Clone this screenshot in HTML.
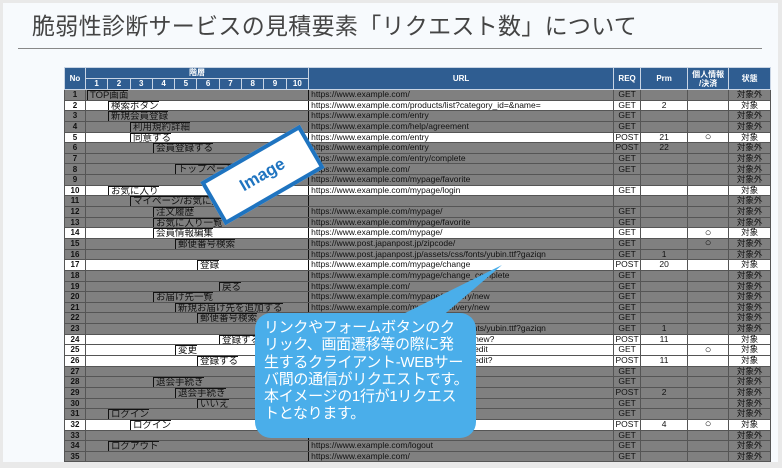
<!DOCTYPE html>
<html><head><meta charset="utf-8"><style>
*{margin:0;padding:0;box-sizing:border-box}
body{width:782px;height:468px;background:#e9e9e9;position:relative;overflow:hidden;font-family:"Liberation Sans","Noto Sans CJK JP",sans-serif}
.slide{position:absolute;left:3px;top:3px;width:775px;height:459px;background:#f7fafd}
.title{position:absolute;left:32px;top:7px;font-size:23px;color:#444;letter-spacing:0.3px;white-space:nowrap}
.rule{position:absolute;left:18px;top:48px;width:744px;height:1px;background:#888}
table{position:absolute;left:64px;top:67px;width:706px;border-collapse:collapse;table-layout:fixed;font-size:8.5px;color:#111}
td,th{border:1px solid #555;padding:0;white-space:nowrap;overflow:hidden;line-height:9.6px;height:10.65px}
th{background:#2f5d91;color:#fff;font-weight:bold;border-color:#c8d4e4;font-size:8px;line-height:10px}
tr.g td{background:#808080}
tr.w td{background:#fff}
td.n{text-align:center;font-weight:bold;font-size:8px}
td.lv{position:relative;border-right:1.5px solid #111}
td.lv span{position:absolute;top:0;font-size:9.5px;border-left:1.5px solid #111;border-top:1.5px solid #111;padding-left:2px;height:11px;line-height:10px}
td.u{padding-left:2px}
td.c{text-align:center}
td.o{text-align:center;font-size:11px;line-height:9px}
.badge{position:absolute;left:205px;top:150px;width:115px;height:50px;background:#fff;border:4px solid #1f74c0;transform:rotate(-30deg);color:#1f74c0;font-weight:bold;font-size:17px;text-align:center;line-height:42px}
.bubble{position:absolute;left:255px;top:313px;width:221px;height:125px;background:#4aaeea;border-radius:16px;color:#fff;font-size:15px;line-height:17.3px;padding:6px 0 0 9px;white-space:nowrap;letter-spacing:-0.3px}
.tail{position:absolute;left:0;top:0}
</style></head><body>
<div class="slide"></div>
<div class="title">脆弱性診断サービスの見積要素「リクエスト数」について</div>
<div class="rule"></div>
<table>
<colgroup><col style="width:21px"><col span="10" style="width:22.3px"><col style="width:305px"><col style="width:27px"><col style="width:47px"><col style="width:41px"><col style="width:42px"></colgroup>
<tr><th rowspan="2">No</th><th colspan="10" style="height:11px">階層</th><th rowspan="2">URL</th><th rowspan="2">REQ</th><th rowspan="2">Prm</th><th rowspan="2" style="line-height:9px">個人情報<br>/決済</th><th rowspan="2">状態</th></tr>
<tr><th>1</th><th>2</th><th>3</th><th>4</th><th>5</th><th>6</th><th>7</th><th>8</th><th>9</th><th>10</th></tr>
<tr class="g"><td class="n">1</td><td colspan="10" class="lv"><span style="left:1px">TOP画面</span></td><td class="u">https://www.example.com/</td><td class="c">GET</td><td class="c"></td><td></td><td class="c">対象外</td></tr>
<tr class="w"><td class="n">2</td><td colspan="10" class="lv"><span style="left:22px">検索ボタン</span></td><td class="u">https://www.example.com/products/list?category_id=&amp;name=</td><td class="c">GET</td><td class="c">2</td><td></td><td class="c">対象</td></tr>
<tr class="g"><td class="n">3</td><td colspan="10" class="lv"><span style="left:22px">新規会員登録</span></td><td class="u">https://www.example.com/entry</td><td class="c">GET</td><td></td><td></td><td class="c">対象外</td></tr>
<tr class="g"><td class="n">4</td><td colspan="10" class="lv"><span style="left:44px">利用規約詳細</span></td><td class="u">https://www.example.com/help/agreement</td><td class="c">GET</td><td></td><td></td><td class="c">対象外</td></tr>
<tr class="w"><td class="n">5</td><td colspan="10" class="lv"><span style="left:44px">同意する</span></td><td class="u">https://www.example.com/entry</td><td class="c">POST</td><td class="c">21</td><td class="o">○</td><td class="c">対象</td></tr>
<tr class="g"><td class="n">6</td><td colspan="10" class="lv"><span style="left:67px">会員登録する</span></td><td class="u">https://www.example.com/entry</td><td class="c">POST</td><td class="c">22</td><td></td><td class="c">対象外</td></tr>
<tr class="g"><td class="n">7</td><td colspan="10" class="lv"></td><td class="u">https://www.example.com/entry/complete</td><td class="c">GET</td><td></td><td></td><td class="c">対象外</td></tr>
<tr class="g"><td class="n">8</td><td colspan="10" class="lv"><span style="left:89px">トップページへ</span></td><td class="u">https://www.example.com/</td><td class="c">GET</td><td></td><td></td><td class="c">対象外</td></tr>
<tr class="g"><td class="n">9</td><td colspan="10" class="lv"></td><td class="u">https://www.example.com/mypage/favorite</td><td class="c"></td><td></td><td></td><td class="c">対象外</td></tr>
<tr class="w"><td class="n">10</td><td colspan="10" class="lv"><span style="left:22px">お気に入り</span></td><td class="u">https://www.example.com/mypage/login</td><td class="c">GET</td><td></td><td></td><td class="c">対象</td></tr>
<tr class="g"><td class="n">11</td><td colspan="10" class="lv"><span style="left:44px">マイページ/お気に入り</span></td><td class="u"></td><td class="c"></td><td></td><td></td><td class="c">対象外</td></tr>
<tr class="g"><td class="n">12</td><td colspan="10" class="lv"><span style="left:67px">注文履歴</span></td><td class="u">https://www.example.com/mypage/</td><td class="c">GET</td><td></td><td></td><td class="c">対象外</td></tr>
<tr class="g"><td class="n">13</td><td colspan="10" class="lv"><span style="left:67px">お気に入り一覧</span></td><td class="u">https://www.example.com/mypage/favorite</td><td class="c">GET</td><td></td><td></td><td class="c">対象外</td></tr>
<tr class="w"><td class="n">14</td><td colspan="10" class="lv"><span style="left:67px">会員情報編集</span></td><td class="u">https://www.example.com/mypage/</td><td class="c">GET</td><td></td><td class="o">○</td><td class="c">対象</td></tr>
<tr class="g"><td class="n">15</td><td colspan="10" class="lv"><span style="left:89px">郵便番号検索</span></td><td class="u">https://www.post.japanpost.jp/zipcode/</td><td class="c">GET</td><td></td><td class="o">○</td><td class="c">対象外</td></tr>
<tr class="g"><td class="n">16</td><td colspan="10" class="lv"></td><td class="u">https://www.post.japanpost.jp/assets/css/fonts/yubin.ttf?gaziqn</td><td class="c">GET</td><td class="c">1</td><td></td><td class="c">対象外</td></tr>
<tr class="w"><td class="n">17</td><td colspan="10" class="lv"><span style="left:111px">登録</span></td><td class="u">https://www.example.com/mypage/change</td><td class="c">POST</td><td class="c">20</td><td></td><td class="c">対象</td></tr>
<tr class="g"><td class="n">18</td><td colspan="10" class="lv"></td><td class="u">https://www.example.com/mypage/change_complete</td><td class="c">GET</td><td></td><td></td><td class="c">対象外</td></tr>
<tr class="g"><td class="n">19</td><td colspan="10" class="lv"><span style="left:133px">戻る</span></td><td class="u">https://www.example.com/</td><td class="c">GET</td><td></td><td></td><td class="c">対象外</td></tr>
<tr class="g"><td class="n">20</td><td colspan="10" class="lv"><span style="left:67px">お届け先一覧</span></td><td class="u">https://www.example.com/mypage/delivery/new</td><td class="c">GET</td><td></td><td></td><td class="c">対象外</td></tr>
<tr class="g"><td class="n">21</td><td colspan="10" class="lv"><span style="left:89px">新規お届け先を追加する</span></td><td class="u">https://www.example.com/mypage/delivery/new</td><td class="c">GET</td><td></td><td></td><td class="c">対象外</td></tr>
<tr class="g"><td class="n">22</td><td colspan="10" class="lv"><span style="left:111px">郵便番号検索</span></td><td class="u"></td><td class="c">GET</td><td></td><td></td><td class="c">対象外</td></tr>
<tr class="g"><td class="n">23</td><td colspan="10" class="lv"></td><td class="u">https://www.post.japanpost.jp/assets/css/fonts/yubin.ttf?gaziqn</td><td class="c">GET</td><td class="c">1</td><td></td><td class="c">対象外</td></tr>
<tr class="w"><td class="n">24</td><td colspan="10" class="lv"><span style="left:133px">登録する</span></td><td class="u">https://www.example.com/mypage/delivery/new?</td><td class="c">POST</td><td class="c">11</td><td></td><td class="c">対象</td></tr>
<tr class="w"><td class="n">25</td><td colspan="10" class="lv"><span style="left:89px">変更</span></td><td class="u">https://www.example.com/mypage/delivery/edit</td><td class="c">GET</td><td></td><td class="o">○</td><td class="c">対象</td></tr>
<tr class="w"><td class="n">26</td><td colspan="10" class="lv"><span style="left:111px">登録する</span></td><td class="u">https://www.example.com/mypage/delivery/edit?</td><td class="c">POST</td><td class="c">11</td><td></td><td class="c">対象</td></tr>
<tr class="g"><td class="n">27</td><td colspan="10" class="lv"></td><td class="u"></td><td class="c">GET</td><td></td><td></td><td class="c">対象外</td></tr>
<tr class="g"><td class="n">28</td><td colspan="10" class="lv"><span style="left:67px">退会手続き</span></td><td class="u"></td><td class="c">GET</td><td></td><td></td><td class="c">対象外</td></tr>
<tr class="g"><td class="n">29</td><td colspan="10" class="lv"><span style="left:89px">退会手続き</span></td><td class="u"></td><td class="c">POST</td><td class="c">2</td><td></td><td class="c">対象外</td></tr>
<tr class="g"><td class="n">30</td><td colspan="10" class="lv"><span style="left:111px">いいえ</span></td><td class="u"></td><td class="c">GET</td><td></td><td></td><td class="c">対象外</td></tr>
<tr class="g"><td class="n">31</td><td colspan="10" class="lv"><span style="left:22px">ログイン</span></td><td class="u"></td><td class="c">GET</td><td></td><td></td><td class="c">対象外</td></tr>
<tr class="w"><td class="n">32</td><td colspan="10" class="lv"><span style="left:44px">ログイン</span></td><td class="u"></td><td class="c">POST</td><td class="c">4</td><td class="o">○</td><td class="c">対象</td></tr>
<tr class="g"><td class="n">33</td><td colspan="10" class="lv"></td><td class="u"></td><td class="c">GET</td><td></td><td></td><td class="c">対象外</td></tr>
<tr class="g"><td class="n">34</td><td colspan="10" class="lv"><span style="left:22px">ログアウト</span></td><td class="u">https://www.example.com/logout</td><td class="c">GET</td><td></td><td></td><td class="c">対象外</td></tr>
<tr class="g"><td class="n">35</td><td colspan="10" class="lv"></td><td class="u">https://www.example.com/</td><td class="c">GET</td><td></td><td></td><td class="c">対象外</td></tr>
</table>
<div class="badge">Image</div>
<svg class="tail" width="782" height="468"><polygon points="395,318 502,265 440,318" fill="#4aaeea"/></svg>
<div class="bubble">リンクやフォームボタンのク<br>リック、画面遷移等の際に発<br>生するクライアント-WEBサー<br>バ間の通信がリクエストです。<br>本イメージの1行が1リクエス<br>トとなります。</div>
</body></html>
